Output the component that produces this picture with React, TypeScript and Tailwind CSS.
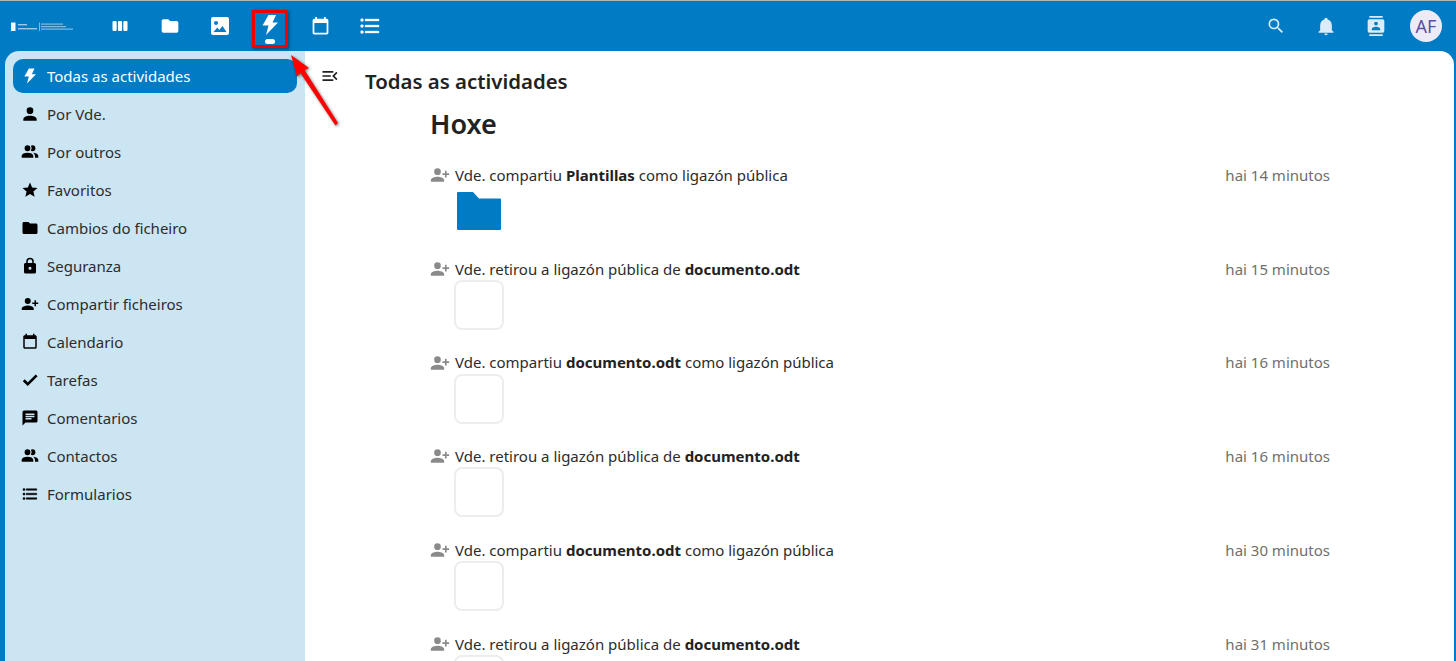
import type { ReactNode } from 'react';

const P = {
  bolt: 'M10.5 2H18l-3.500 7.500H20L8 22l2.500-9.500H4.500z',
  folder: 'M10,4H4C2.89,4 2,4.89 2,6V18A2,2 0 0,0 4,20H20A2,2 0 0,0 22,18V8C22,6.89 21.1,6 20,6H12L10,4Z',
  account: 'M12,4A4,4 0 0,1 16,8A4,4 0 0,1 12,12A4,4 0 0,1 8,8A4,4 0 0,1 12,4M12,14C16.42,14 20,15.79 20,18V20H4V18C4,15.79 7.58,14 12,14Z',
  group: 'M16 17V19H2V17S2 13 9 13 16 17 16 17M12.5 7.5A3.5 3.5 0 1 0 9 11A3.5 3.5 0 0 0 12.5 7.5M15.94 13A5.32 5.32 0 0 1 18 17V19H22V17S22 13.37 15.94 13M15 4A3.39 3.39 0 0 0 13.07 4.59A5 5 0 0 1 13.07 10.41A3.39 3.39 0 0 0 15 11A3.5 3.5 0 0 0 15 4Z',
  star: 'M12,17.27L18.18,21L16.54,13.97L22,9.24L14.81,8.62L12,2L9.19,8.62L2,9.24L7.45,13.97L5.82,21L12,17.27Z',
  lock: 'M12,17A2,2 0 0,0 14,15C14,13.89 13.1,13 12,13A2,2 0 0,0 10,15A2,2 0 0,0 12,17M18,8A2,2 0 0,1 20,10V20A2,2 0 0,1 18,22H6A2,2 0 0,1 4,20V10C4,8.89 4.9,8 6,8H7V6A5,5 0 0,1 12,1A5,5 0 0,1 17,6V8H18M12,3A3,3 0 0,0 9,6V8H15V6A3,3 0 0,0 12,3Z',
  share: 'M9,14C11.67,14 17,15.33 17,18V20H1V18C1,15.33 6.33,14 9,14M18,10V7H20V10H23V12H20V15H18V12H15V10M9,12A4,4 0 0,1 5,8A4,4 0 0,1 9,4A4,4 0 0,1 13,8A4,4 0 0,1 9,12Z',
  calendar: 'M19 3H18V1H16V3H8V1H6V3H5C3.89 3 3 3.9 3 5V19C3 20.1 3.89 21 5 21H19C20.1 21 21 20.1 21 19V5C21 3.9 20.1 3 19 3M19 19H5V8H19V19Z',
  check: 'M21,7L9,19L3.5,13.5L4.91,12.09L9,16.17L19.59,5.59L21,7Z',
  comment: 'M20,2H4A2,2 0 0,0 2,4V22L6,18H20A2,2 0 0,0 22,16V4C22,2.89 21.1,2 20,2M6,9H18V11H6M14,14H6V12H14M18,8H6V6H18',
  list: 'M7,5H21V7H7V5M7,13V11H21V13H7M4,4.5A1.5,1.5 0 0,1 5.5,6A1.5,1.5 0 0,1 4,7.5A1.5,1.5 0 0,1 2.5,6A1.5,1.5 0 0,1 4,4.5M4,10.5A1.5,1.5 0 0,1 5.5,12A1.5,1.5 0 0,1 4,13.5A1.5,1.5 0 0,1 2.5,12A1.5,1.5 0 0,1 4,10.5M7,19V17H21V19H7M4,16.5A1.5,1.5 0 0,1 5.5,18A1.5,1.5 0 0,1 4,19.5A1.5,1.5 0 0,1 2.5,18A1.5,1.5 0 0,1 4,16.5Z',
  search: 'M9.5,3A6.5,6.5 0 0,1 16,9.5C16,11.11 15.41,12.59 14.44,13.73L14.71,14H15.5L20.5,19L19,20.5L14,15.5V14.71L13.73,14.44C12.59,15.41 11.11,16 9.5,16A6.5,6.5 0 0,1 3,9.5A6.5,6.5 0 0,1 9.5,3M9.5,5C7,5 5,7 5,9.5C5,12 7,14 9.5,14C12,14 14,12 14,9.5C14,7 12,5 9.5,5Z',
  bell: 'M21,19V20H3V19L5,17V11C5,7.9 7.03,5.17 10,4.29C10,4.19 10,4.1 10,4A2,2 0 0,1 12,2A2,2 0 0,1 14,4C14,4.1 14,4.19 14,4.29C16.97,5.17 19,7.9 19,11V17L21,19M14,21A2,2 0 0,1 12,23A2,2 0 0,1 10,21',
  contacts: 'M20,0H4V2H20V0M4,24H20V22H4V24M20,4H4A2,2 0 0,0 2,6V18A2,2 0 0,0 4,20H20A2,2 0 0,0 22,18V6A2,2 0 0,0 20,4M12,6.75A2.25,2.25 0 0,1 14.25,9A2.25,2.25 0 0,1 12,11.25A2.25,2.25 0 0,1 9.75,9A2.25,2.25 0 0,1 12,6.75M17,17H7V15.5C7,13.83 10.33,13 12,13C13.67,13 17,13.83 17,15.5V17Z',
  menuOpen: 'M21,15.61L19.59,17L14.58,12L19.59,7L21,8.39L17.44,12L21,15.61M3,6H16V8H3V6M3,13V11H13V13H3M3,18V16H16V18H3Z',
  photos: 'M5 3h14a2 2 0 0 1 2 2v14a2 2 0 0 1-2 2H5a2 2 0 0 1-2-2V5a2 2 0 0 1 2-2M8 7a2 2 0 1 0 0 4 2 2 0 0 0 0-4M5.5 18h13L14.5 12l-3.2 4-2-2.4z',
  deck: 'M4.5 6h2A1.5 1.5 0 0 1 8 7.5v9A1.5 1.5 0 0 1 6.5 18h-2A1.5 1.5 0 0 1 3 16.5v-9A1.5 1.5 0 0 1 4.5 6M11 6h2a1.5 1.5 0 0 1 1.5 1.5v9a1.5 1.5 0 0 1-1.5 1.5h-2a1.5 1.5 0 0 1-1.5-1.5v-9A1.5 1.5 0 0 1 11 6M17.5 6h2A1.5 1.5 0 0 1 21 7.5v9a1.5 1.5 0 0 1-1.5 1.5h-2a1.5 1.5 0 0 1-1.5-1.5v-9A1.5 1.5 0 0 1 17.5 6',
};

function Icon({ d, className }: { d: string; className: string }) {
  return (
    <svg viewBox="0 0 24 24" className={className} fill="currentColor" fillRule="evenodd">
      <path d={d} />
    </svg>
  );
}

function AppLink({ d, active, size = 'w-6 h-6' }: { d: string; active?: boolean; size?: string }) {
  return (
    <div className="relative w-[50px] h-[50px] flex items-center justify-center text-white">
      <Icon d={d} className={active ? 'w-6 h-6 -mt-[2px]' : size} />
      {active && <span className="absolute left-[20px] top-[38px] w-[10px] h-[5px] rounded-full bg-white" />}
    </div>
  );
}

function Logo() {
  return (
    <svg viewBox="0 0 62 10" className="w-[62px] h-[10px]" fill="#fff">
      <rect x="0" y="0.5" width="4.5" height="8.5" opacity="0.95" />
      <rect x="7" y="2" width="9" height="1.4" opacity="0.6" />
      <rect x="7" y="6" width="19" height="1.4" opacity="0.6" />
      <rect x="28" y="0.5" width="0.7" height="8.5" opacity="0.7" />
      <rect x="30" y="1.5" width="22" height="1.2" opacity="0.5" />
      <rect x="30" y="4" width="25" height="1.2" opacity="0.5" />
      <rect x="30" y="6.5" width="32" height="1.2" opacity="0.5" />
    </svg>
  );
}

const navItems = [
  { d: P.account, label: 'Por Vde.', size: 'w-5 h-5' },
  { d: P.group, label: 'Por outros', size: 'w-5 h-5' },
  { d: P.star, label: 'Favoritos' },
  { d: P.folder, label: 'Cambios do ficheiro' },
  { d: P.lock, label: 'Seguranza' },
  { d: P.share, label: 'Compartir ficheiros' },
  { d: P.calendar, label: 'Calendario' },
  { d: P.check, label: 'Tarefas', size: 'w-[18px] h-[18px] stroke-current stroke-[1.5]' },
  { d: P.comment, label: 'Comentarios' },
  { d: P.group, label: 'Contactos', size: 'w-5 h-5' },
  { d: P.list, label: 'Formularios', size: 'w-[18px] h-[18px] stroke-current stroke-[0.6]' },
];

const doc = <b className="font-bold text-[#222]">documento.odt</b>;

const activities: { text: ReactNode; time: string; folder?: boolean }[] = [
  { text: <>Vde. compartiu <b className="font-bold text-[#222]">Plantillas</b> como ligazón pública</>, time: 'hai 14 minutos', folder: true },
  { text: <>Vde. retirou a ligazón pública de {doc}</>, time: 'hai 15 minutos' },
  { text: <>Vde. compartiu {doc} como ligazón pública</>, time: 'hai 16 minutos' },
  { text: <>Vde. retirou a ligazón pública de {doc}</>, time: 'hai 16 minutos' },
  { text: <>Vde. compartiu {doc} como ligazón pública</>, time: 'hai 30 minutos' },
  { text: <>Vde. retirou a ligazón pública de {doc}</>, time: 'hai 31 minutos' },
];

export default function App() {
  return (
    <div className="relative w-[1456px] h-[661px] overflow-hidden bg-[#007bc4] border-t border-[#b5b5b5] font-['Noto_Sans',sans-serif] text-[15px]">
      <header className="flex items-center h-[50px]">
        <div className="w-[95px] pl-[11px] pt-[1px]">
          <Logo />
        </div>
        <nav className="flex">
          <AppLink d={P.deck} size="w-5 h-5" />
          <AppLink d={P.folder} size="w-5 h-5" />
          <AppLink d={P.photos} />
          <AppLink d={P.bolt} active />
          <AppLink d={P.calendar} size="w-[21px] h-[21px]" />
          <AppLink d={P.list} size="w-6 h-6 stroke-current stroke-[0.3]" />
        </nav>
        <div className="ml-auto flex items-center pr-[14px] text-[#d9ecf7]">
          <div className="w-[50px] flex justify-center"><Icon d={P.search} className="w-5 h-5" /></div>
          <div className="w-[50px] flex justify-center"><Icon d={P.bell} className="w-5 h-5" /></div>
          <div className="w-[50px] flex justify-center"><Icon d={P.contacts} className="w-5 h-5" /></div>
          <div className="ml-[9px] w-8 h-8 rounded-full bg-[#ecebf7] text-[#5b4fa8] flex items-center justify-center text-[18px]">AF</div>
        </div>
      </header>

      <div className="flex h-[610px] pl-[5px] pr-[2px]">
        <aside className="w-[300px] shrink-0 bg-[#cce5f3] rounded-tl-[14px] pt-2 px-2">
          <div className="flex items-center h-[34px] rounded-[10px] bg-[#007bc4] text-white pl-[5px] mb-[2px]">
            <span className="w-[24px] flex justify-center"><Icon d={P.bolt} className="w-[18px] h-[18px]" /></span>
            <span className="ml-[5px]">Todas as actividades</span>
          </div>
          {navItems.map((item) => (
            <div key={item.label} className="flex items-center h-[38px] pl-[5px] text-[#2c2c2c]">
              <span className="w-[24px] flex justify-center text-black"><Icon d={item.d} className={item.size ?? 'w-[18px] h-[18px]'} /></span>
              <span className="ml-[5px]">{item.label}</span>
            </div>
          ))}
        </aside>

        <main className="flex-1 flex bg-white rounded-tr-[14px] min-w-0">
          <div className="w-[60px] pt-[15px] pl-[15px] text-[#222]">
            <Icon d={P.menuOpen} className="w-[20px] h-[20px]" />
          </div>
          <div className="flex-1 min-w-0">
            <h1 className="text-[20.4px] leading-[28px] font-semibold text-[#222] mt-[16px]">Todas as actividades</h1>
            <div className="pl-[65px] w-[965px]">
              <h2 className="text-[27px] leading-[38px] font-semibold text-[#222] mt-[10px] mb-[21px]">Hoxe</h2>
              {activities.map((a, i) => (
                <div key={i} className="h-[93.8px]">
                  <div className="flex items-center h-[22px] text-[#2c2c2c]">
                    <Icon d={P.share} className="w-[20px] h-[20px] text-[#8a8a8a]" />
                    <span className="ml-[5px]">{a.text}</span>
                    <span className="ml-auto text-[#6f6f6f]">{a.time}</span>
                  </div>
                  {a.folder ? (
                    <svg viewBox="0 0 44 38" className="ml-[27px] mt-[6px] w-[44px] h-[38px]" fill="#007bc4">
                      <path d="M1 0h15l6 6.5h21a1 1 0 0 1 1 1V37a1 1 0 0 1-1 1H1a1 1 0 0 1-1-1V1a1 1 0 0 1 1-1z" />
                    </svg>
                  ) : (
                    <div className="ml-[24px] w-[50px] h-[50px] rounded-[8px] border-2 border-[#ededed] bg-white" />
                  )}
                </div>
              ))}
            </div>
          </div>
        </main>
      </div>

      {/* highlight drawn on top of the screenshot */}
      <div className="absolute left-[252px] top-[9px] w-[36px] h-[38px] border-[3px] border-[#f00000] shadow-[1px_1px_3px_rgba(0,0,0,0.45)]" />
      <svg className="absolute left-[285px] top-[50px] w-[60px] h-[80px]" viewBox="0 0 60 80" fill="#ff0000" style={{ filter: 'drop-shadow(1px 1px 1.5px rgba(0,0,0,0.55))' }}>
        <path d="M6 4 L24 17 L19.5 19 L53 72 L50.5 74.5 L15.5 22 L12 25.5 Z" />
      </svg>
    </div>
  );
}
